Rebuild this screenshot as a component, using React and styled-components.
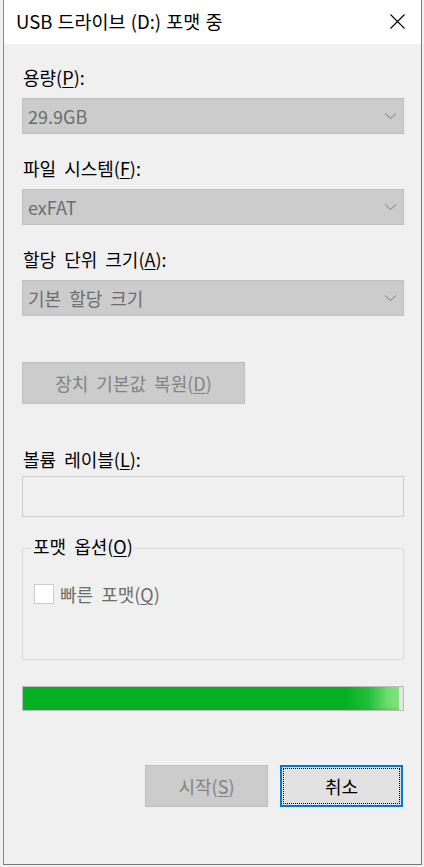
import React from "react";
import styled, { createGlobalStyle } from "styled-components";

const Global = createGlobalStyle`
  html, body { margin: 0; padding: 0; background: #f0f0f0; }
  body { font-family: "Segoe UI", "Noto Sans CJK KR", sans-serif; }
  * { box-sizing: border-box; }
`;

const Frame = styled.div`
  margin-left: 3px;
  width: 419px;
  height: 865px;
  border-left: 1px solid #8a8a8a;
  border-right: 1px solid #7a7a7a;
  border-bottom: 1px solid #7a7a7a;
  background: #f0f0f0;
  display: flex;
  flex-direction: column;
`;

const TitleBar = styled.div`
  height: 44px;
  background: #ffffff;
  display: flex;
  align-items: center;
  justify-content: space-between;
  padding: 0 16px 0 12px;
`;

const Title = styled.div`
  font-size: 18.5px;
  color: #000;
  line-height: 22px;
  margin-top: -2px;
  word-spacing: 1px;
`;

const CloseIcon = styled.svg`
  width: 15px;
  height: 15px;
  display: block;
  margin-top: -2px;
`;

const Body = styled.div`
  flex: 1;
  display: flex;
  flex-direction: column;
  padding: 22px 17px 0 18px;
  word-spacing: 4px;
`;

const Label = styled.div`
  font-size: 18px;
  line-height: 22px;
  color: #000;
  padding-left: 1px;
  margin-top: ${(p) => p.$mt || 0}px;
  margin-bottom: ${(p) => p.$mb || 10}px;
`;

const Combo = styled.div`
  height: 36px;
  background: #cccccc;
  border: 1px solid #bfbfbf;
  display: flex;
  align-items: center;
  justify-content: space-between;
  padding: 0 6px 0 5px;
  font-size: 18px;
  color: #6d6d6d;
`;

const Chevron = styled.svg`
  width: 13px;
  height: 8px;
  display: block;
`;

const FlatButton = styled.div`
  width: ${(p) => p.$w}px;
  height: 42px;
  display: flex;
  align-items: center;
  justify-content: center;
  font-size: 18px;
  background: ${(p) => (p.$disabled ? "#cccccc" : "#e1e1e1")};
  border: ${(p) => (p.$focus ? "2px solid #0078d7" : "1px solid #bfbfbf")};
  color: ${(p) => (p.$disabled ? "#838383" : "#000")};
  margin-top: ${(p) => p.$mt || 0}px;
  position: relative;
`;

const FocusRing = styled.div`
  position: absolute;
  inset: 1px;
  border: 1px dotted #000;
  pointer-events: none;
`;

const TextBox = styled.div`
  height: 41px;
  border: 1px solid #cccccc;
  background: #f0f0f0;
`;

const Group = styled.div`
  margin-top: 31px;
  height: 112px;
  border: 1px solid #dcdcdc;
  position: relative;
  padding: 32px 0 0 11px;
`;

const Legend = styled.div`
  position: absolute;
  top: -14px;
  left: 8px;
  padding: 0 2px;
  background: #f0f0f0;
  font-size: 18px;
  line-height: 22px;
  color: #000;
`;

const CheckRow = styled.div`
  display: flex;
  align-items: center;
  gap: 6px;
  font-size: 18px;
  color: #6d6d6d;
`;

const CheckBox = styled.div`
  width: 20px;
  height: 20px;
  background: #ffffff;
  border: 1px solid #cccccc;
`;

const Progress = styled.div`
  margin-top: 26px;
  height: 25px;
  border: 1px solid #bcbcbc;
  background: #e6e6e6;
  display: flex;
`;

const ProgressFill = styled.div`
  height: 100%;
  background:
    linear-gradient(180deg, rgba(255,255,255,0) 0%, rgba(255,255,255,0) 85%, rgba(20,160,40,0.25) 100%),
    linear-gradient(90deg, #06b025 0%, #06b025 86%, #22c03a 92%, #6fdc6f 97%, #7ee27e 100%);
`;

const ButtonRow = styled.div`
  margin-top: 54px;
  display: flex;
  justify-content: flex-end;
  gap: 12px;
  padding-right: 1px;
`;

const U = styled.u`
  text-underline-offset: 2px;
  text-decoration-thickness: 1px;
`;

function Dropdown({ value }) {
  return (
    <Combo>
      <span>{value}</span>
      <Chevron viewBox="0 0 13 8">
        <path d="M1 1.5 L6.5 6.5 L12 1.5" fill="none" stroke="#9a9a9a" strokeWidth="1.1" />
      </Chevron>
    </Combo>
  );
}

export default function App() {
  const progress = 98.9;
  return (
    <>
      <Global />
      <Frame>
        <TitleBar>
          <Title>USB 드라이브 (D:) 포맷 중</Title>
          <CloseIcon viewBox="0 0 15 15">
            <path d="M0.5 0.5 L14.5 14.5 M14.5 0.5 L0.5 14.5" stroke="#000" strokeWidth="1.1" fill="none" />
          </CloseIcon>
        </TitleBar>
        <Body>
          <Label>용량(<U>P</U>):</Label>
          <Dropdown value="29.9GB" />
          <Label $mt={23}>파일 시스템(<U>F</U>):</Label>
          <Dropdown value="exFAT" />
          <Label $mt={23}>할당 단위 크기(<U>A</U>):</Label>
          <Dropdown value="기본 할당 크기" />
          <FlatButton $w={223} $disabled $mt={46}>
            장치 기본값 복원(<U>D</U>)
          </FlatButton>
          <Label $mt={44} $mb={6}>볼륨 레이블(<U>L</U>):</Label>
          <TextBox />
          <Group>
            <Legend>포맷 옵션(<U>O</U>)</Legend>
            <CheckRow>
              <CheckBox />
              <span>빠른 포맷(<U>Q</U>)</span>
            </CheckRow>
          </Group>
          <Progress>
            <ProgressFill style={{ width: `${progress}%` }} />
          </Progress>
          <ButtonRow>
            <FlatButton $w={123} $disabled>
              시작(<U>S</U>)
            </FlatButton>
            <FlatButton $w={123} $focus>
              <FocusRing />
              취소
            </FlatButton>
          </ButtonRow>
        </Body>
      </Frame>
    </>
  );
}
